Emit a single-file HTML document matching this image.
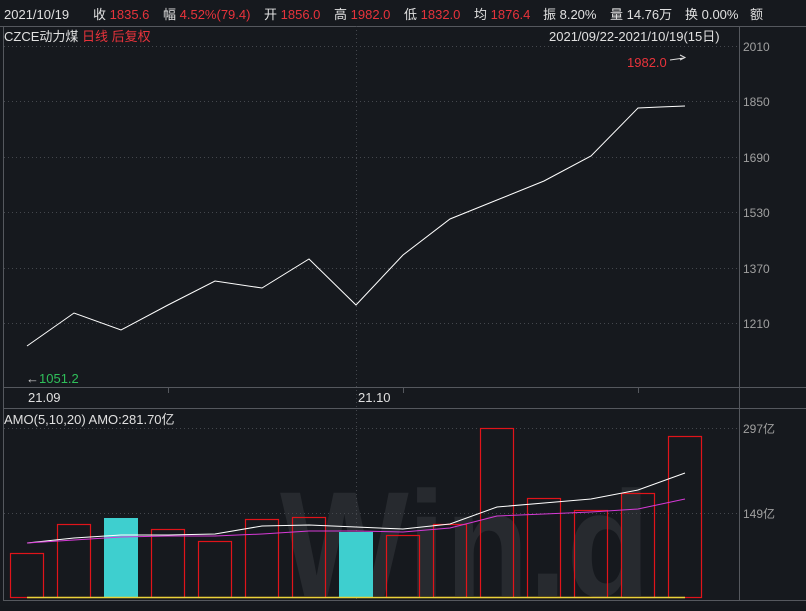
<!DOCTYPE html>
<html><head><meta charset="utf-8"><style>
body{margin:0;background:#15181d;width:806px;height:606px;overflow:hidden;font-family:"Liberation Sans","Noto Sans CJK SC",sans-serif}
svg text{font-family:"Liberation Sans","Noto Sans CJK SC",sans-serif}
</style></head><body>
<svg width="806" height="606" xmlns="http://www.w3.org/2000/svg">
<rect width="806" height="606" fill="#16191e"/>
<g font-size="13" fill="#e0e0e0">
<text x="4" y="19">2021/10/19</text>
<text x="93" y="19">收 <tspan fill="#e8333b">1835.6</tspan></text>
<text x="163" y="19">幅 <tspan fill="#e8333b">4.52%(79.4)</tspan></text>
<text x="264" y="19">开 <tspan fill="#e8333b">1856.0</tspan></text>
<text x="334" y="19">高 <tspan fill="#e8333b">1982.0</tspan></text>
<text x="404" y="19">低 <tspan fill="#e8333b">1832.0</tspan></text>
<text x="474" y="19">均 <tspan fill="#e8333b">1876.4</tspan></text>
<text x="543" y="19">振 8.20%</text>
<text x="610" y="19">量 14.76万</text>
<text x="685" y="19">换 0.00%</text>
<text x="750" y="19">额</text>
<text x="4" y="41">CZCE动力煤 <tspan fill="#e8333b">日线 后复权</tspan></text>
<text x="549" y="41">2021/09/22-2021/10/19(15日)</text>
</g>
<text x="280" y="596" font-size="150" font-weight="bold" fill="#272a2f" textLength="370" lengthAdjust="spacingAndGlyphs">Win.d</text>
<g fill="none" stroke="#55585e" stroke-width="1">
<line x1="0" y1="26.5" x2="806" y2="26.5"/>
<line x1="3.5" y1="26" x2="3.5" y2="600"/>
<line x1="739.5" y1="26" x2="739.5" y2="600"/>
<line x1="3" y1="387.5" x2="806" y2="387.5"/>
<line x1="3" y1="408.5" x2="806" y2="408.5"/>
<line x1="3" y1="600.5" x2="806" y2="600.5"/>
</g>
<g stroke="#44474d" stroke-dasharray="1,3">
<line x1="4" y1="46.5" x2="739" y2="46.5"/>
<line x1="4" y1="101.5" x2="739" y2="101.5"/>
<line x1="4" y1="157.5" x2="739" y2="157.5"/>
<line x1="4" y1="212.5" x2="739" y2="212.5"/>
<line x1="4" y1="268.5" x2="739" y2="268.5"/>
<line x1="4" y1="323.5" x2="739" y2="323.5"/>
<line x1="4" y1="428.5" x2="739" y2="428.5"/>
<line x1="4" y1="513.5" x2="739" y2="513.5"/>
<line x1="356.5" y1="26" x2="356.5" y2="600"/>
</g>
<g fill="#a0a0a0" font-size="12">
<text x="743" y="51">2010</text><text x="743" y="106">1850</text><text x="743" y="162">1690</text>
<text x="743" y="217">1530</text><text x="743" y="273">1370</text><text x="743" y="328">1210</text>
<text x="743" y="433">297亿</text><text x="743" y="518">149亿</text>
</g>
<g stroke="#55585e"><line x1="168.5" y1="388" x2="168.5" y2="393"/><line x1="403.5" y1="388" x2="403.5" y2="393"/><line x1="638.5" y1="388" x2="638.5" y2="393"/></g>
<text x="28" y="402" font-size="13" fill="#e0e0e0">21.09</text>
<text x="358" y="402" font-size="13" fill="#e0e0e0">21.10</text>
<text x="26" y="383" font-size="13" fill="#2fbf5a"><tspan fill="#ccc">←</tspan>1051.2</text>
<text x="627" y="67" font-size="13" fill="#e8333b">1982.0</text>
<path d="M670 60 L684 58 M680 55 L685 57.5 L680 60" stroke="#ddd" fill="none"/>
<polyline fill="none" stroke="#fff" stroke-width="1" points="27,346 74,313 121,330 168,305 215,281 262,288 309,259 356,305 403,255 450,219 497,200 544,181 591,156 638,108 660,107 685,106"/>
<text x="4" y="424" font-size="13" fill="#e0e0e0">AMO(5,10,20)  AMO:281.70亿</text>
<g fill="none" stroke="#e0141a" stroke-width="1.2">
<rect x="10.5" y="553.5" width="33" height="44"/>
<rect x="57.5" y="524.5" width="33" height="73"/>
<rect x="151.5" y="529.5" width="33" height="68"/>
<rect x="198.5" y="541.5" width="33" height="56"/>
<rect x="245.5" y="519.5" width="33" height="78"/>
<rect x="292.5" y="517.5" width="33" height="80"/>
<rect x="386.5" y="535.5" width="33" height="62"/>
<rect x="433.5" y="524.5" width="33" height="73"/>
<rect x="480.5" y="428.5" width="33" height="169"/>
<rect x="527.5" y="498.5" width="33" height="99"/>
<rect x="574.5" y="510.5" width="33" height="87"/>
<rect x="621.5" y="493.5" width="33" height="104"/>
<rect x="668.5" y="436.5" width="33" height="161"/>
</g>
<rect x="104" y="518" width="34" height="80" fill="#3ecfcf"/>
<rect x="339" y="532" width="34" height="66" fill="#3ecfcf"/>
<line x1="27" y1="597.5" x2="685" y2="597.5" stroke="#e8d23a" stroke-width="1.5"/>
<polyline fill="none" stroke="#fff" points="27,543 74,538 121,535 168,535 215,534 262,526 309,525 356,527 403,529 450,524 497,507 544,503 591,499 638,490 685,473"/>
<polyline fill="none" stroke="#d63ad6" points="27,543 74,540 121,537 168,536 215,536 262,534 309,531 356,531 403,532 450,528 497,516 544,514 591,512 638,509 685,499"/>
</svg>
</body></html>
